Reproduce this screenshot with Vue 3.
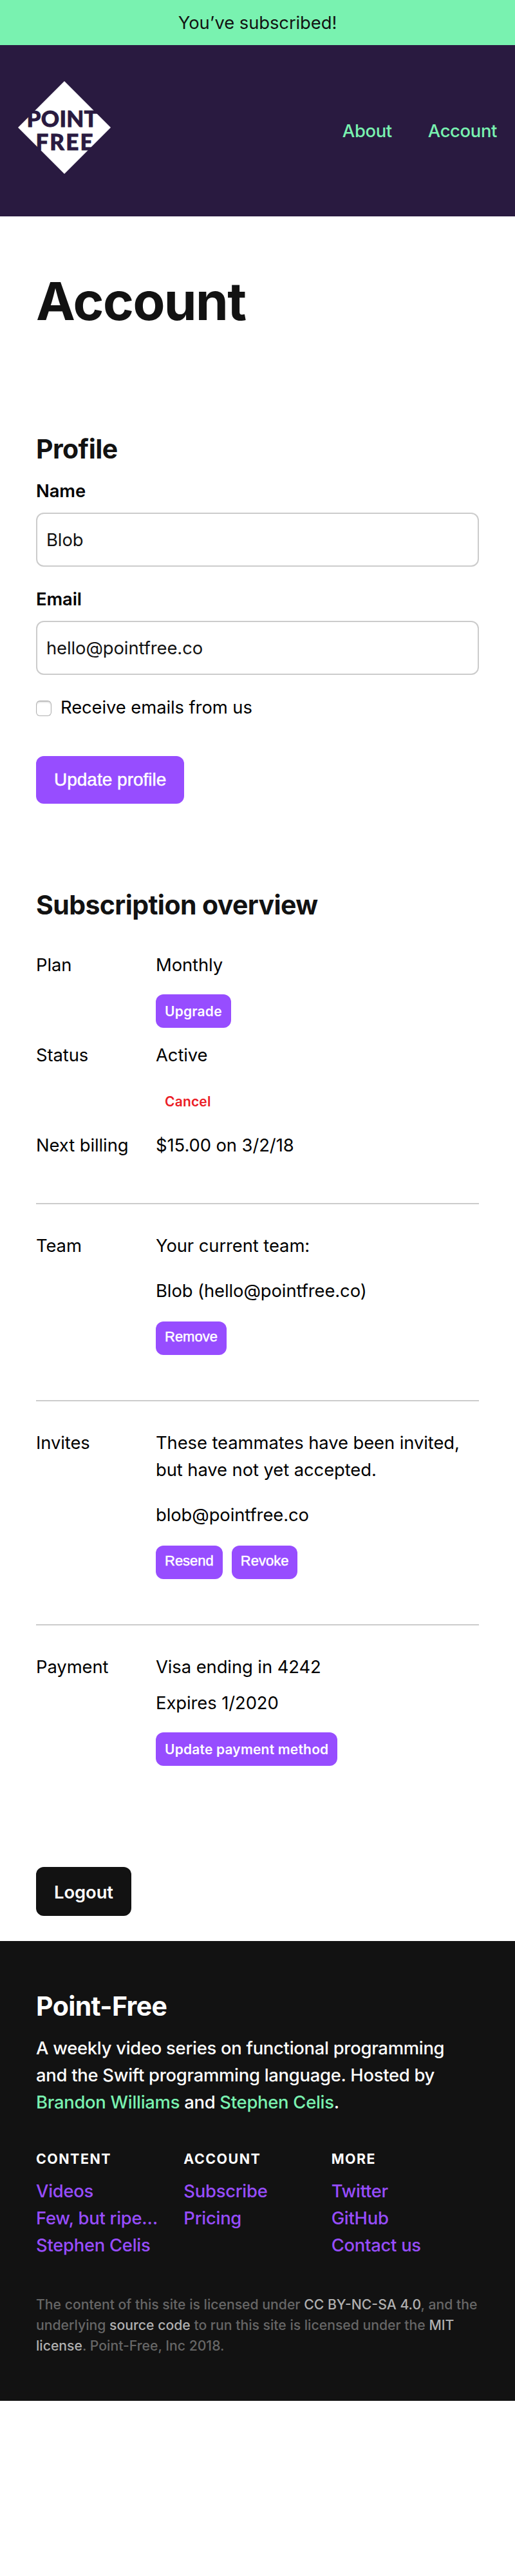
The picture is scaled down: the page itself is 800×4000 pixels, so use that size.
<script setup>
import { ref } from 'vue'

const name = ref('Blob')
const email = ref('hello@pointfree.co')
const receive = ref(false)

const columns = [
  { title: 'Content', links: ['Videos', 'Few, but ripe…', 'Stephen Celis'] },
  { title: 'Account', links: ['Subscribe', 'Pricing'] },
  { title: 'More', links: ['Twitter', 'GitHub', 'Contact us'] },
]
</script>

<template>
  <div class="page">
    <div class="banner">You’ve subscribed!</div>

    <header class="header">
      <svg class="logo" viewBox="0 0 144 144" role="img" aria-label="Point Free">
        <path d="M72 0 144 72 72 144 0 72Z" fill="#fff" />
        <g
          fill="#291a40"
          stroke="#291a40"
          stroke-width="0.8"
          font-family="Lato, sans-serif"
          font-weight="900"
          font-size="35"
        >
          <text x="13.6" y="70.6" textLength="110" lengthAdjust="spacing">POINT</text>
          <text x="27.4" y="107.2" textLength="89" lengthAdjust="spacing">FREE</text>
        </g>
      </svg>
      <nav class="nav">
        <a>About</a>
        <a>Account</a>
      </nav>
    </header>

    <main class="main">
      <h1>Account</h1>

      <form class="profile" @submit.prevent>
        <h2>Profile</h2>
        <label class="field">
          <span>Name</span>
          <input v-model="name" type="text" />
        </label>
        <label class="field">
          <span>Email</span>
          <input v-model="email" type="text" />
        </label>
        <label class="check">
          <input v-model="receive" type="checkbox" />
          <span>Receive emails from us</span>
        </label>
        <button class="btn large native" type="submit">Update profile</button>
      </form>

      <section class="overview">
        <h2 class="overview-title">Subscription overview</h2>

        <div class="group first">
          <div class="row">
            <div class="term">Plan</div>
            <div class="detail">
              <p>Monthly</p>
              <a class="btn small">Upgrade</a>
            </div>
          </div>
          <div class="row">
            <div class="term">Status</div>
            <div class="detail">
              <p>Active</p>
              <a class="btn small danger">Cancel</a>
            </div>
          </div>
          <div class="row">
            <div class="term">Next billing</div>
            <div class="detail"><p class="billing">$15.00 on 3/2/18</p></div>
          </div>
        </div>

        <div class="group">
          <div class="row">
            <div class="term">Team</div>
            <div class="detail people">
              <p>Your current team:</p>
              <p>Blob (hello@pointfree.co)</p>
              <button class="btn small native">Remove</button>
            </div>
          </div>
        </div>

        <div class="group">
          <div class="row">
            <div class="term">Invites</div>
            <div class="detail people">
              <p>These teammates have been invited,<br />but have not yet accepted.</p>
              <p>blob@pointfree.co</p>
              <div class="actions">
                <button class="btn small native">Resend</button>
                <button class="btn small native">Revoke</button>
              </div>
            </div>
          </div>
        </div>

        <div class="group last">
          <div class="row">
            <div class="term">Payment</div>
            <div class="detail payment">
              <p>Visa ending in 4242</p>
              <p>Expires 1/2020</p>
              <a class="btn small">Update payment method</a>
            </div>
          </div>
        </div>
      </section>

      <a class="btn large logout">Logout</a>
    </main>

    <footer class="footer">
      <h2>Point-Free</h2>
      <p class="about">
        A weekly video series on functional programming<br />
        and the Swift programming language. Hosted by<br />
        <a>Brandon Williams</a> and <a>Stephen Celis</a>.
      </p>
      <div class="columns">
        <div v-for="c in columns" :key="c.title" class="column">
          <h3>{{ c.title }}</h3>
          <a v-for="l in c.links" :key="l">{{ l }}</a>
        </div>
      </div>
      <p class="legal">
        The content of this site is licensed under <a>CC BY-NC-SA 4.0</a>, and the<br />
        underlying <a>source code</a> to run this site is licensed under the <a>MIT<br />
        license</a>. Point-Free, Inc 2018.
      </p>
    </footer>
  </div>
</template>

<style>
body {
  margin: 0;
  background: #fff;
}
</style>

<style scoped>
* {
  box-sizing: border-box;
}
.page {
  width: 800px;
  font-family: Inter, "Liberation Sans", sans-serif;
  font-size: 27.4px;
  line-height: 42px;
  letter-spacing: -0.08px;
  color: #000;
}
h1,
h2,
h3,
p {
  margin: 0;
}
.banner {
  height: 70px;
  padding: 14px 0;
  background: #79f2b0;
  color: #121212;
  text-align: center;
}
.header {
  height: 266px;
  padding: 0 28px;
  display: flex;
  align-items: center;
  justify-content: space-between;
  background: #291a40;
}
.logo {
  width: 144px;
  height: 144px;
  margin-bottom: 10px;
}
.nav {
  display: flex;
  gap: 56px;
  color: #79f2b0;
  font-weight: 500;
  letter-spacing: -0.35px;
}
.main {
  padding: 82px 56px 39px;
}
h1 {
  font-size: 81.5px;
  line-height: 100px;
  font-weight: 700;
  color: #121212;
  letter-spacing: -1.5px;
}
h2 {
  font-size: 41px;
  line-height: 60px;
  font-weight: 700;
  color: #121212;
  letter-spacing: -0.6px;
}
.profile {
  margin-top: 149px;
}
.field {
  display: block;
  margin-top: 29px;
}
h2 + .field {
  margin-top: 14px;
}
.field span {
  display: block;
  font-weight: 600;
}
.field input {
  display: block;
  width: 100%;
  height: 84px;
  margin: 13px 0 0;
  padding: 0 14px;
  border: 2px solid #ccc;
  border-radius: 12px;
  background: #fff;
  font: inherit;
  letter-spacing: inherit;
  color: #121212;
  outline: none;
}
.check {
  display: flex;
  align-items: center;
  gap: 14px;
  margin-top: 29px;
}
.check input {
  appearance: none;
  width: 24px;
  height: 24px;
  margin: 4px 0 0;
  border: 1px solid #b0b0b0;
  border-top-color: #999;
  border-radius: 6px;
  background: #fff;
  box-shadow: inset 0 2px 2px rgba(0, 0, 0, 0.13);
}
.btn {
  display: block;
  width: fit-content;
  margin: 0;
  border: 0;
  border-radius: 12px;
  background: #974dff;
  color: #fff;
  font-family: inherit;
  white-space: nowrap;
}
.large {
  height: 74px;
  padding: 0 28px;
  font-size: 28px;
  line-height: 74px;
  font-weight: 500;
}
.small {
  height: 52px;
  padding: 0 14px;
  font-size: 21px;
  line-height: 54px;
  font-weight: 600;
  letter-spacing: 0.19px;
}
.native {
  font-family: "Liberation Sans", Arial, sans-serif;
  font-weight: 400;
  -webkit-text-stroke: 0.5px #fff;
}
.small.native {
  font-size: 22px;
  line-height: 48px;
  padding-bottom: 4px;
  letter-spacing: 0;
}
.profile > .btn {
  margin-top: 55px;
}
.danger {
  background: none;
  color: #eb1c26;
}
.overview {
  margin-top: 127px;
}
.group {
  padding: 43px 0 70px;
  border-top: 2px solid #ccc;
}
.first {
  padding: 42px 0 69px;
  border-top: 0;
}
.last {
  padding-bottom: 0;
}
.row {
  display: grid;
  grid-template-columns: 186px 1fr;
}
.detail .btn {
  margin-top: 25px;
}
.first .detail .btn {
  margin-bottom: 21px;
}
.people p + p {
  margin-top: 28px;
}
.people > .btn,
.actions {
  margin-top: 27px;
}
.actions {
  display: flex;
  gap: 14px;
}
.actions .btn {
  margin-top: 0;
}
.payment p + p {
  margin-top: 14px;
}
.logout {
  height: 76px;
  margin-top: 157px;
  background: #121212;
  font-size: 27.4px;
  font-weight: 600;
  line-height: 78px;
}
.footer {
  height: 714px;
  padding: 71px 56px 0;
  background: #121212;
  color: #fff;
}
.footer h2 {
  color: #fff;
}
.about {
  margin-top: 14px;
  font-weight: 500;
  letter-spacing: -0.27px;
}
.about a {
  color: #79f2b0;
}
.columns {
  display: grid;
  grid-template-columns: repeat(3, 1fr);
  margin-top: 51px;
}
h3 {
  margin-bottom: 13px;
  font-size: 21.4px;
  line-height: 32px;
  font-weight: 700;
  letter-spacing: 1.5px;
  text-transform: uppercase;
}
.column a {
  display: block;
  color: #974dff;
  font-weight: 500;
  letter-spacing: -0.26px;
}
.legal {
  margin-top: 55px;
  font-size: 21.2px;
  line-height: 32px;
  font-weight: 500;
  letter-spacing: 0;
  color: #666;
}
.legal a {
  color: #b0b0b0;
}
</style>
